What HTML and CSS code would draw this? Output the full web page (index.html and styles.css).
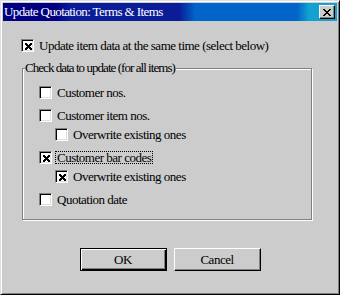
FILE: index.html
```html
<!DOCTYPE html>
<html>
<head>
<meta charset="utf-8">
<link rel="stylesheet" href="styles.css">
</head>
<body>
<div class="window">
  <div class="titlebar">
    <span class="title">Update Quotation: Terms &amp; Items</span>
    <span class="close"><svg width="8" height="7" viewBox="0 0 8 7"><path d="M0 0h2v1h-2zM6 0h2v1h-2zM1 1h2v1h-2zM5 1h2v1h-2zM2 2h4v1h-4zM3 3h2v1h-2zM2 4h4v1h-4zM1 5h2v1h-2zM5 5h2v1h-2zM0 6h2v1h-2zM6 6h2v1h-2z" fill="#000"/></svg></span>
  </div>
  <div class="content">
    <div class="row main-row">
      <span class="box checked"><svg width="7" height="7" viewBox="0 0 7 7"><path d="M0 0h2v1h-2zM5 0h2v1h-2zM0 1h3v1h-3zM4 1h3v1h-3zM1 2h5v1h-5zM2 3h3v1h-3zM1 4h5v1h-5zM0 5h3v1h-3zM4 5h3v1h-3zM0 6h2v1h-2zM5 6h2v1h-2z" fill="#000"/></svg></span>
      <span class="label">Update item data at the same time (select below)</span>
    </div>
    <div class="group">
      <span class="legend">Check data to update (for all items)</span>
      <div class="items">
        <div class="item">
          <div class="row"><span class="box"></span><span class="label">Customer nos.</span></div>
        </div>
        <div class="item">
          <div class="row"><span class="box"></span><span class="label">Customer item nos.</span></div>
          <div class="row sub"><span class="box"></span><span class="label">Overwrite existing ones</span></div>
        </div>
        <div class="item">
          <div class="row"><span class="box checked"><svg width="7" height="7" viewBox="0 0 7 7"><path d="M0 0h2v1h-2zM5 0h2v1h-2zM0 1h3v1h-3zM4 1h3v1h-3zM1 2h5v1h-5zM2 3h3v1h-3zM1 4h5v1h-5zM0 5h3v1h-3zM4 5h3v1h-3zM0 6h2v1h-2zM5 6h2v1h-2z" fill="#000"/></svg></span><span class="label focus">Customer bar codes</span></div>
          <div class="row sub"><span class="box checked"><svg width="7" height="7" viewBox="0 0 7 7"><path d="M0 0h2v1h-2zM5 0h2v1h-2zM0 1h3v1h-3zM4 1h3v1h-3zM1 2h5v1h-5zM2 3h3v1h-3zM1 4h5v1h-5zM0 5h3v1h-3zM4 5h3v1h-3zM0 6h2v1h-2zM5 6h2v1h-2z" fill="#000"/></svg></span><span class="label">Overwrite existing ones</span></div>
        </div>
        <div class="item">
          <div class="row"><span class="box"></span><span class="label">Quotation date</span></div>
        </div>
      </div>
    </div>
    <div class="buttons">
      <button class="btn default">OK</button>
      <button class="btn">Cancel</button>
    </div>
  </div>
</div>
</body>
</html>
```
FILE: styles.css
```css
html, body {
  margin: 0;
  padding: 0;
  background: #cccccc;
}
body {
  width: 340px;
  height: 295px;
  overflow: hidden;
  font-family: "Liberation Serif", "Times New Roman", serif;
  font-size: 13px;
  letter-spacing: -0.5px;
  color: #000;
}
.window {
  width: 340px;
  height: 295px;
  box-sizing: border-box;
  background: #cccccc;
  border: 1px solid;
  border-color: #dfdfdf #000 #000 #dfdfdf;
  box-shadow: inset 1px 1px 0 #fff, inset -1px -1px 0 #808080;
  padding: 2px;
  display: flex;
  flex-direction: column;
}
.titlebar {
  height: 18px;
  flex: none;
  display: flex;
  align-items: center;
  justify-content: space-between;
  background: linear-gradient(90deg, #000080 0, #000080 52px, #0a1c98 68px, #0a1c98 176px, #0064c8 192px, #0064c8 294px, #12a2d2 306px, #12a2d2 100%);
  color: #fff;
}
.title {
  padding-left: 1px;
  line-height: 18px;
  white-space: nowrap;
  letter-spacing: -0.6px;
}
.close {
  width: 16px;
  height: 14px;
  box-sizing: border-box;
  margin-right: 2px;
  background: #cccccc;
  border: 1px solid;
  border-color: #fff #000 #000 #fff;
  box-shadow: inset -1px -1px 0 #808080;
  display: flex;
  align-items: center;
  justify-content: center;
}
.close svg { display: block; margin-left: -1px; }
.content {
  flex: 1;
  display: flex;
  flex-direction: column;
  padding: 18px 0 0 18px;
}
.row {
  display: flex;
  align-items: center;
  height: 13px;
  white-space: nowrap;
}
.box {
  width: 13px;
  height: 13px;
  box-sizing: border-box;
  flex: none;
  background: #fff;
  border: 1px solid;
  border-color: #808080 #fff #fff #808080;
  box-shadow: inset 1px 1px 0 #000, inset -1px -1px 0 #dfdfdf;
  display: flex;
  align-items: center;
  justify-content: center;
}
.box svg { display: block; margin: 1px 0 0 1px; }
.label {
  margin-left: 3px;
  padding: 0 1px;
  height: 13px;
  box-sizing: border-box;
  line-height: 11px;
  border: 1px dotted transparent;
}
.label.focus {
  border-color: #000;
}
.group {
  margin: 16px 25px 0 1px;
  border: 1px solid #808080;
  box-shadow: 1px 1px 0 #fff, inset 1px 1px 0 #fff;
  display: flex;
  flex-direction: column;
  padding: 0 0 13px 16px;
}
.legend {
  align-self: flex-start;
  margin: -9px 0 0 -14px;
  padding: 0 1px 0 0;
  line-height: 16px;
  letter-spacing: -0.95px;
  background: #cccccc;
  white-space: nowrap;
}
.items {
  margin-top: 10px;
  display: flex;
  flex-direction: column;
  gap: 10px;
}
.item {
  display: flex;
  flex-direction: column;
  gap: 6px;
}
.sub {
  padding-left: 16px;
}
.buttons {
  display: flex;
  justify-content: center;
  gap: 7px;
  margin-top: 28px;
  margin-left: -18px;
}
.btn {
  width: 87px;
  height: 23px;
  box-sizing: border-box;
  font-family: "Liberation Serif", "Times New Roman", serif;
  font-size: 13px;
  letter-spacing: -0.5px;
  color: #000;
  background: #cccccc;
  border: 1px solid;
  border-color: #fff #000 #000 #fff;
  box-shadow: inset -1px -1px 0 #808080;
  padding: 0;
  margin: 0;
}
.btn.default {
  border: 1px solid #000;
  box-shadow: inset 1px 1px 0 #fff, inset -1px -1px 0 #000, inset -2px -2px 0 #808080;
}
```
